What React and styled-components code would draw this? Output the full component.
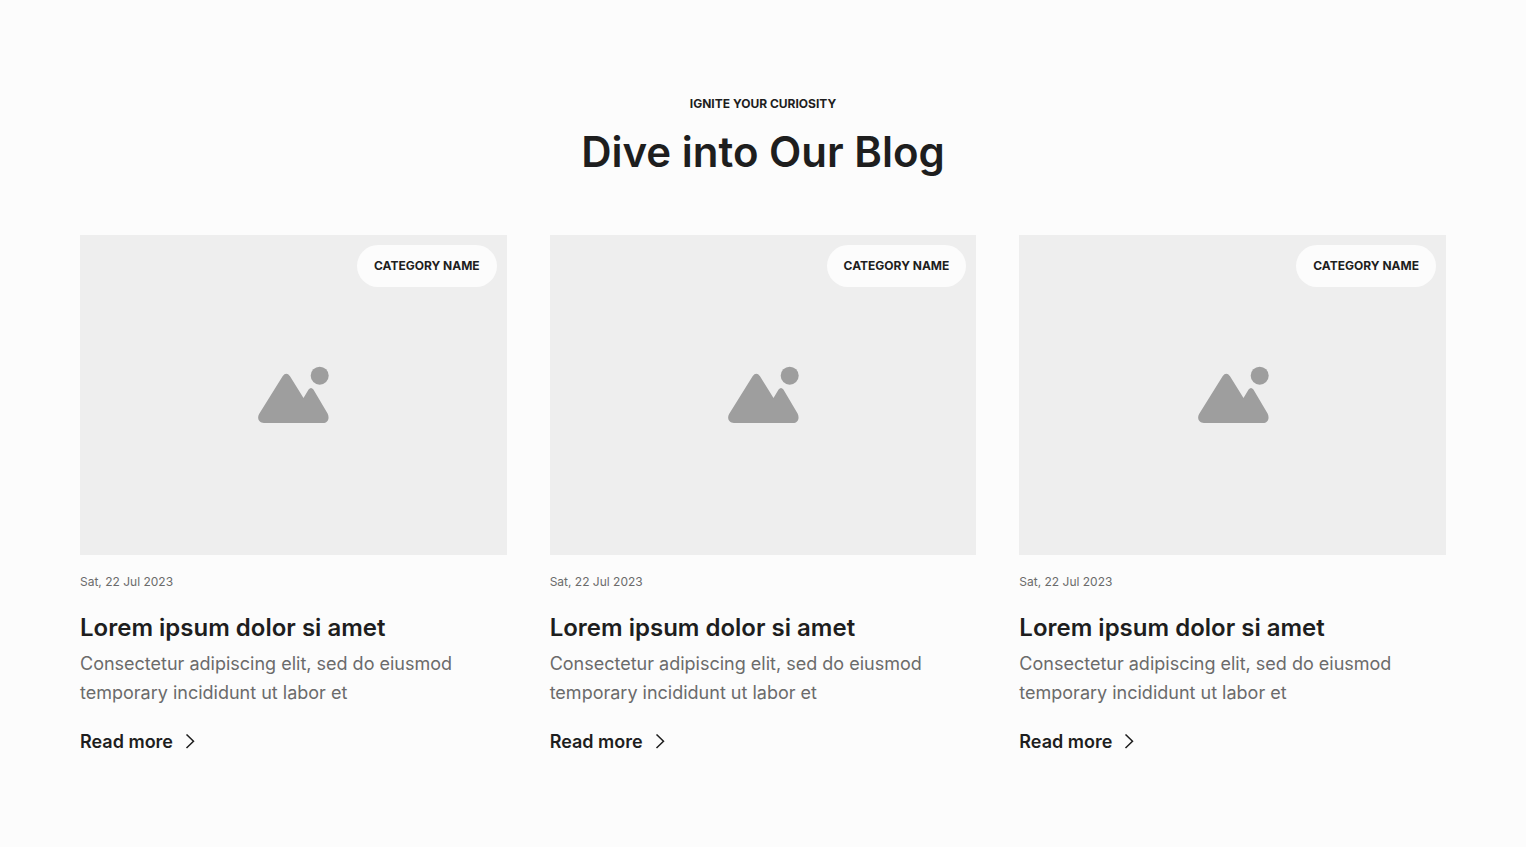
import React from 'react';
import styled, { createGlobalStyle } from 'styled-components';

const GlobalStyle = createGlobalStyle`
  body {
    margin: 0;
    background-color: #fcfcfc;
    color: #1e1e1e;
    font-family: Inter, sans-serif;
  }
`;

const Section = styled.section`
  padding: 92px 80px;
`;

const Header = styled.header`
  display: flex;
  flex-direction: column;
  align-items: center;
  gap: 8px;
  margin-bottom: 55px;
  text-align: center;
`;

const Eyebrow = styled.p`
  margin: 0;
  font-size: 12px;
  font-weight: 700;
  line-height: 24px;
  text-transform: uppercase;
`;

const Heading = styled.h2`
  margin: 0;
  font-size: 42px;
  font-weight: 600;
  line-height: 56px;
`;

const Grid = styled.div`
  display: grid;
  grid-template-columns: repeat(3, 1fr);
  gap: 43px;
`;

const Card = styled.article`
  display: flex;
  flex-direction: column;
  align-items: flex-start;
`;

const Cover = styled.div`
  position: relative;
  display: flex;
  align-items: center;
  justify-content: center;
  width: 100%;
  height: 320px;
  background-color: #eeeeee;
`;

const Category = styled.span`
  position: absolute;
  top: 10px;
  right: 10px;
  padding: 0 17px;
  border-radius: 21px;
  background-color: #fcfcfc;
  font-size: 12px;
  font-weight: 700;
  line-height: 42px;
  text-transform: uppercase;
`;

const PostDate = styled.time`
  margin-top: 17px;
  color: #6b6b6b;
  font-size: 12px;
  line-height: 20px;
`;

const Title = styled.h3`
  margin: 20px 0 0;
  font-size: 24px;
  font-weight: 600;
  line-height: 32px;
`;

const Excerpt = styled.p`
  max-width: 380px;
  margin: 5px 0 0;
  color: #6b6b6b;
  font-size: 18px;
  line-height: 29px;
`;

const ReadMore = styled.a`
  display: inline-flex;
  align-items: center;
  gap: 12px;
  margin-top: 21px;
  color: inherit;
  font-size: 18px;
  font-weight: 600;
  line-height: 28px;
  text-decoration: none;

  &:hover {
    text-decoration: underline;
  }
`;

const posts = [1, 2, 3].map((id) => ({
  id,
  category: 'Category name',
  date: '2023-07-22',
  dateLabel: 'Sat, 22 Jul 2023',
  title: 'Lorem ipsum dolor si amet',
  excerpt: 'Consectetur adipiscing elit, sed do eiusmod temporary incididunt ut labor et',
}));

const MountainIcon = () => (
  <svg width="72" height="58" viewBox="0 0 72 58" fill="#9e9e9e" aria-hidden="true">
    <circle cx="62.7" cy="9.7" r="9" />
    <path d="M25.6 10.2Q29.3 5.400 33 10.200L46.500 32L51.600 23.600Q54 20.200 56.400 23.600L70.600 47.600C73 52.500 70.600 57 66 57H7C2 57-0.300 52.500 2.100 48Z" />
  </svg>
);

const ChevronIcon = () => (
  <svg width="12" height="16" viewBox="0 0 12 16" fill="none" stroke="#1e1e1e" strokeWidth="1.5" aria-hidden="true">
    <path d="M1.500 0.500L8.500 7.200L1.500 14" />
  </svg>
);

const PostCard = ({ post }) => (
  <Card>
    <Cover>
      <MountainIcon />
      <Category>{post.category}</Category>
    </Cover>
    <PostDate dateTime={post.date}>{post.dateLabel}</PostDate>
    <Title>{post.title}</Title>
    <Excerpt>{post.excerpt}</Excerpt>
    <ReadMore href="#">
      Read more
      <ChevronIcon />
    </ReadMore>
  </Card>
);

const App = () => (
  <>
    <GlobalStyle />
    <Section>
      <Header>
        <Eyebrow>Ignite your curiosity</Eyebrow>
        <Heading>Dive into Our Blog</Heading>
      </Header>
      <Grid>
        {posts.map((post) => (
          <PostCard key={post.id} post={post} />
        ))}
      </Grid>
    </Section>
  </>
);

export default App;
